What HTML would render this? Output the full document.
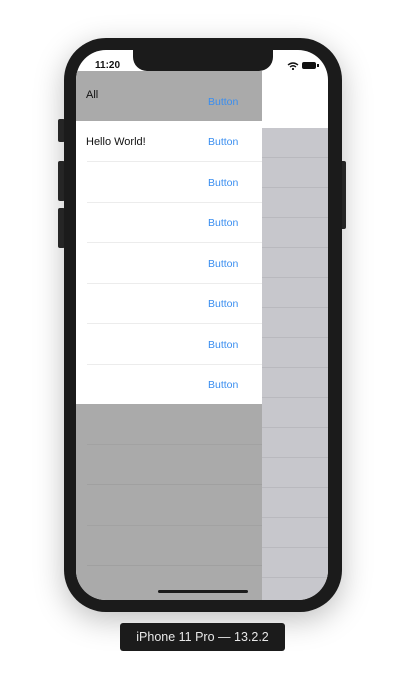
<!DOCTYPE html><html><head><style>
*{margin:0;padding:0;box-sizing:border-box}
body{width:405px;height:687px;background:#fff;position:relative;overflow:hidden;font-family:"Liberation Sans",sans-serif}
.a{position:absolute}
.phone{left:64px;top:38px;width:278px;height:574px;background:#1b1b1b;border-radius:42px;box-shadow:0 8px 30px rgba(0,0,0,.25)}
.screen{left:76px;top:50px;width:252px;height:550px;border-radius:30px;overflow:hidden;background:#fff}
.btn{position:absolute;left:132px;font-size:10.5px;color:#3a8ef0}
.sep{position:absolute;left:11px;right:0;height:1px;background:#ececec}
</style></head><body>
<div class="a" style="left:58px;top:119px;width:7px;height:23px;background:#2a2a2a;border-radius:2px"></div>
<div class="a" style="left:58px;top:161px;width:7px;height:40px;background:#2a2a2a;border-radius:2px"></div>
<div class="a" style="left:58px;top:208px;width:7px;height:40px;background:#2a2a2a;border-radius:2px"></div>
<div class="a" style="left:340px;top:161px;width:6px;height:68px;background:#2a2a2a;border-radius:2px"></div>
<div class="a phone"></div>
<div class="a screen">
 <div class="a" style="left:19px;top:10px;font-size:10px;font-weight:bold;color:#111">11:20</div>
 <div class="a" style="left:57px;top:0;width:140px;height:21px;background:#1b1b1b;border-radius:0 0 14px 14px"></div>
 <svg class="a" style="left:211px;top:12px" width="12" height="8" viewBox="0 0 12 8"><path d="M1 3Q6-1 11 3M3 5Q6 2.5 9 5" stroke="#111" stroke-width="1.4" fill="none"/><circle cx="6" cy="7" r="1.1" fill="#111"/></svg>
 <div class="a" style="left:226px;top:12px;width:14px;height:7px;background:#111;border-radius:2px"></div>
 <div class="a" style="left:241px;top:14px;width:1.5px;height:3px;background:#111"></div>
 <!-- right strip -->
 <div class="a" style="left:186px;top:78px;width:66px;height:472px;background:repeating-linear-gradient(#c7c7cc 0 29px,#b9b9be 29px 30px)"></div>
 <!-- left panel -->
 <div class="a" style="left:0;top:21px;width:186px;height:50px;background:#aaa">
  <div class="a" style="left:10px;top:18px;font-size:11px;color:#111">All</div>
  <div class="btn" style="top:25px">Button</div>
 </div>
 <div class="a" style="left:0;top:71px;width:186px;height:283px;background:#fff">
  <div class="a" style="left:10px;top:15px;font-size:11px;color:#111">Hello World!</div>
  <div class="btn" style="top:15px">Button</div><div class="sep" style="top:40px"></div>
  <div class="btn" style="top:56px">Button</div><div class="sep" style="top:81px"></div>
  <div class="btn" style="top:96px">Button</div><div class="sep" style="top:121px"></div>
  <div class="btn" style="top:137px">Button</div><div class="sep" style="top:162px"></div>
  <div class="btn" style="top:177px">Button</div><div class="sep" style="top:202px"></div>
  <div class="btn" style="top:218px">Button</div><div class="sep" style="top:243px"></div>
  <div class="btn" style="top:258px">Button</div>
 </div>
 <div class="a" style="left:0;top:354px;width:186px;height:196px;background:#aaa">
  <div class="sep" style="top:40px;background:#a2a2a2"></div>
  <div class="sep" style="top:80px;background:#a0a0a0"></div>
  <div class="sep" style="top:121px;background:#a2a2a2"></div>
  <div class="sep" style="top:161px;background:#a0a0a0"></div>
 </div>
 <div class="a" style="left:82px;top:540px;width:90px;height:3px;background:#1b1b1b;border-radius:2px"></div>
</div>
<div class="a" style="left:120px;top:623px;width:165px;height:28px;background:#1b1b1b;border-radius:3px;color:#e8e8e8;font-size:12.5px;text-align:center;line-height:28px">iPhone 11 Pro — 13.2.2</div>
</body></html>
